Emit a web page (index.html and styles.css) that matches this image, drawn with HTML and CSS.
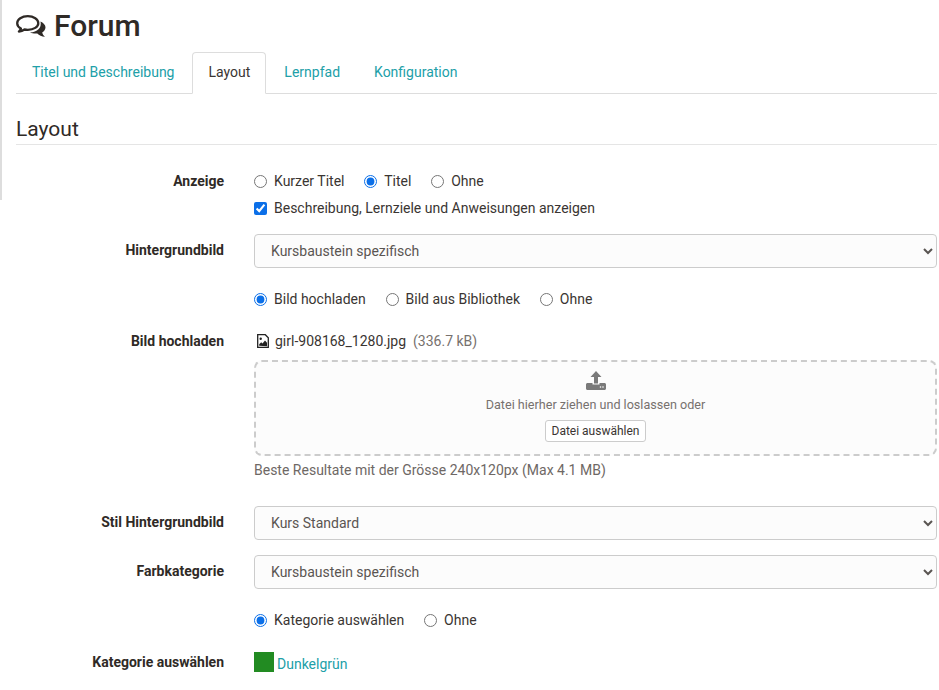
FILE: index.html
```html
<!DOCTYPE html>
<html lang="de">
<head>
    <meta charset="UTF-8">
    <meta name="viewport" content="width=device-width, initial-scale=1.0">
    <title>Forum</title>
    <link rel="stylesheet" href="styles.css">
</head>
<body>
    <div class="page">
        <h1 class="page-title">
            <svg class="title-icon" viewBox="0 0 30 22" width="30" height="22" aria-hidden="true">
                <path d="M11.800 1.200C5.800 1.200 1.200 4.300 1.200 8.200c0 2.200 1.400 4.100 3.700 5.400-.3 1-.9 2-2 3 2.200-.2 4.100-1 5.600-2.100 1 .2 2.100.3 3.300.3 5.900 0 10.500-2.900 10.500-6.600S17.700 1.200 11.800 1.200z" fill="none" stroke="#2f2a26" stroke-width="2.300" stroke-linejoin="round"/>
                <path d="M24.500 6.500c2.700 1.200 5 3.300 5 5.800 0 2.200-1.300 4-3.300 5.200.3 1.400 1.200 2.900 2.800 4.300-3.300-.3-5.900-1.500-7.700-3.400-2.300.3-5.300 0-7.300-1 7.200-.2 12-4.400 10.500-10.900z" fill="#2f2a26"/>
            </svg>
            Forum
        </h1>

        <ul class="tabs">
            <li class="tab"><a href="#">Titel und Beschreibung</a></li>
            <li class="tab active"><a href="#">Layout</a></li>
            <li class="tab"><a href="#">Lernpfad</a></li>
            <li class="tab"><a href="#">Konfiguration</a></li>
        </ul>

        <h2 class="section-title">Layout</h2>

        <form class="form">
            <div class="form-row row-anzeige">
                <div class="form-label">Anzeige</div>
                <div class="form-control">
                    <div class="choices">
                        <label class="choice"><input type="radio" name="anzeige">Kurzer Titel</label>
                        <label class="choice"><input type="radio" name="anzeige" checked>Titel</label>
                        <label class="choice"><input type="radio" name="anzeige">Ohne</label>
                    </div>
                    <label class="choice check-line"><input type="checkbox" checked>Beschreibung, Lernziele und Anweisungen anzeigen</label>
                </div>
            </div>

            <div class="form-row row-select">
                <div class="form-label">Hintergrundbild</div>
                <div class="form-control">
                    <select class="select"><option>Kursbaustein spezifisch</option></select>
                </div>
            </div>

            <div class="form-row row-radio">
                <div class="form-label"></div>
                <div class="form-control choices">
                    <label class="choice"><input type="radio" name="bild" checked>Bild hochladen</label>
                    <label class="choice"><input type="radio" name="bild">Bild aus Bibliothek</label>
                    <label class="choice"><input type="radio" name="bild">Ohne</label>
                </div>
            </div>

            <div class="form-row row-upload">
                <div class="form-label">Bild hochladen</div>
                <div class="form-control">
                    <div class="file-line">
                        <svg class="file-icon" viewBox="0 0 12 14" width="12" height="14" aria-hidden="true">
                            <path d="M.7.7h7.600l3 3v9.600H.7z" fill="none" stroke="#222" stroke-width="1.300"/>
                            <path d="M2.200 11.800V10.200l2-2 1.300 1.300 2.500-3 2 2.300v3.500z" fill="#222"/>
                            <circle cx="3.700" cy="4.800" r="1.200" fill="#222"/>
                        </svg>
                        <span class="file-name">girl-908168_1280.jpg</span>
                        <span class="file-size">(336.7 kB)</span>
                    </div>
                    <div class="dropzone">
                        <svg class="upload-icon" viewBox="0 0 20 19" width="20" height="19" aria-hidden="true">
                            <path d="M10 0l5.500 6H12v6.500H8V6H4.500z" fill="#7a7a7a"/>
                            <path d="M0 13.500C0 12.700.7 12 1.500 12H6.500v1.500h7V12h5c.8 0 1.500.7 1.500 1.500v4c0 .8-.7 1.500-1.500 1.500h-17C.7 19 0 18.300 0 17.500z" fill="#7a7a7a"/>
                            <circle cx="14.500" cy="16" r=".8" fill="#fff"/>
                            <circle cx="17" cy="16" r=".8" fill="#fff"/>
                        </svg>
                        <div class="drop-text">Datei hierher ziehen und loslassen oder</div>
                        <button type="button" class="file-button">Datei auswählen</button>
                    </div>
                    <div class="help-text">Beste Resultate mit der Grösse 240x120px (Max 4.1 MB)</div>
                </div>
            </div>

            <div class="form-row row-select">
                <div class="form-label">Stil Hintergrundbild</div>
                <div class="form-control">
                    <select class="select"><option>Kurs Standard</option></select>
                </div>
            </div>

            <div class="form-row row-select">
                <div class="form-label">Farbkategorie</div>
                <div class="form-control">
                    <select class="select"><option>Kursbaustein spezifisch</option></select>
                </div>
            </div>

            <div class="form-row row-radio">
                <div class="form-label"></div>
                <div class="form-control choices">
                    <label class="choice"><input type="radio" name="kategorie" checked>Kategorie auswählen</label>
                    <label class="choice"><input type="radio" name="kategorie">Ohne</label>
                </div>
            </div>

            <div class="form-row row-category">
                <div class="form-label">Kategorie auswählen</div>
                <div class="form-control category">
                    <span class="swatch"></span>
                    <a href="#" class="category-link">Dunkelgrün</a>
                </div>
            </div>
        </form>
    </div>
</body>
</html>
```

FILE: styles.css
```css
body {
    margin: 0;
    font-family: Roboto, "Liberation Sans", sans-serif;
    font-size: 14px;
    line-height: 20px;
    color: #3a3532;
    background: #fff;
    overflow: hidden;
}
.page {
    margin-right: 2px;
    padding-left: 16px;
    background: linear-gradient(#ddd, #ddd) left top / 2px 200px no-repeat;
}
.page-title {
    display: flex;
    align-items: center;
    gap: 8px;
    margin: 0;
    height: 52px;
    font-size: 30px;
    font-weight: 500;
    color: #2f2a26;
}
.tabs {
    display: flex;
    list-style: none;
    margin: 0;
    padding: 0;
    height: 42px;
    box-sizing: border-box;
    border-bottom: 1px solid #ddd;
}
.tab a {
    display: block;
    padding: 9px 15px;
    margin-right: 2px;
    height: 41px;
    box-sizing: border-box;
    color: #21a0a8;
    text-decoration: none;
    border: 1px solid transparent;
    border-radius: 4px 4px 0 0;
}
.tab.active a {
    height: 42px;
    color: #3a3532;
    background: #fff;
    border-color: #ddd #ddd #fff;
}
.section-title {
    margin: 21px 0 0;
    height: 29px;
    font-size: 21px;
    line-height: 28px;
    font-weight: 400;
    color: #2f2a26;
    border-bottom: 1px solid #e5e5e5;
}
.form {
    padding-top: 26px;
}
.form-row {
    display: grid;
    grid-template-columns: 208px 1fr;
    column-gap: 30px;
}
.form-label {
    text-align: right;
    font-weight: 700;
    color: #2f2a26;
}
.choices {
    display: flex;
    gap: 19.8px;
}
.choice {
    display: flex;
    align-items: center;
    color: #3a3532;
}
.choice input {
    width: 13px;
    height: 13px;
    margin: 1px 7px 0 0;
    flex: none;
    accent-color: #0b6fe8;
}
.check-line {
    margin-top: 7px;
}
.row-anzeige {
    height: 63px;
}
.select {
    display: block;
    width: 100%;
    height: 34px;
    padding: 0 12px;
    font-family: inherit;
    font-size: 14px;
    color: #5a5552;
    background-color: #fcfcfc;
    border: 1px solid #ccc;
    border-radius: 4px;
}
.row-select {
    margin-bottom: 15px;
}
.row-select .form-label {
    padding-top: 6px;
}
.row-radio {
    height: 20px;
    margin-top: 21px;
    margin-bottom: 22px;
}
.row-upload {
    height: 175px;
}
.file-line {
    display: flex;
    align-items: center;
    height: 20px;
    margin-bottom: 9px;
}
.file-icon {
    margin-left: 3px;
    margin-right: 6px;
}
.file-size {
    margin-left: 7px;
    color: #77716e;
}
.dropzone {
    display: flex;
    flex-direction: column;
    align-items: center;
    height: 96px;
    box-sizing: border-box;
    padding-top: 9px;
    background: #fcfcfc;
    border: 2px dashed #ccc;
    border-radius: 8px;
}
.upload-icon {
    display: block;
}
.drop-text {
    margin-top: 5px;
    font-size: 12.6px;
    color: #77716e;
}
.file-button {
    margin-top: 5px;
    height: 22px;
    padding: 0 5.5px;
    font-family: inherit;
    font-size: 12px;
    color: #3a3532;
    background: #fff;
    border: 1px solid #ccc;
    border-radius: 3px;
}
.help-text {
    margin-top: 4px;
    color: #6e6865;
}
.category {
    display: flex;
    align-items: center;
    gap: 3px;
    height: 20px;
}
.swatch {
    width: 20px;
    height: 20px;
    background: #228b22;
}
.category-link {
    margin-top: 4px;
    color: #21a0a8;
    text-decoration: none;
}
```
